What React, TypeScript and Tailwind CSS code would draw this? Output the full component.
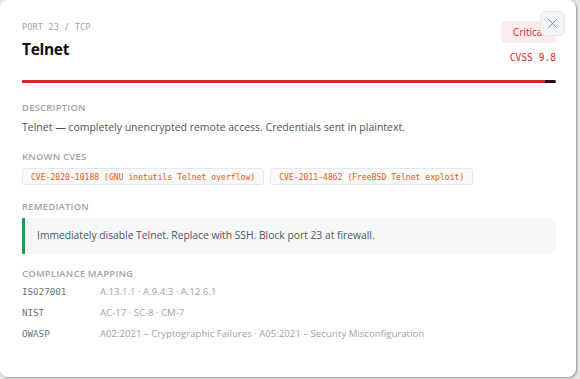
import React from "react";

const mono = { fontFamily: '"DejaVu Sans Mono", "Liberation Mono", monospace' };
const sans = { fontFamily: '"Open Sans", "Noto Sans", sans-serif' };

function Label({ children }: { children: React.ReactNode }) {
  return (
    <div className="text-[9.5px] font-semibold uppercase tracking-[0.2px] text-[#9ca3af] leading-none">
      {children}
    </div>
  );
}

export default function App() {
  return (
    <div className="w-[580px] h-[379px] bg-[#e5e5e5] overflow-hidden" style={sans}>
      <div className="relative w-[576px] h-[377px] bg-white rounded-[8px] shadow-[1px_1px_2px_rgba(0,0,0,0.35)] pl-[22px] pr-[20px] pt-[22px]">
        <button className="absolute top-[11px] right-[11px] w-[25px] h-[25px] rounded-[5px] bg-[#f3f4f6] border border-[#e5e7eb] flex items-center justify-center z-10">
          <svg width="9" height="9" viewBox="0 0 9 9" fill="none">
            <path d="M0.5 0.5L8.5 8.5M8.5 0.5L0.5 8.5" stroke="#7a8ba0" strokeWidth="1" strokeLinecap="round" />
          </svg>
        </button>

        <div className="flex justify-between items-start">
          <div className="flex flex-col">
            <div className="text-[8.6px] text-[#9ca3af] leading-none tracking-[0.1px] mt-[1px]" style={mono}>
              PORT 23 / TCP
            </div>
            <div className="text-[15.5px] font-bold text-[#111111] leading-none mt-[10px] tracking-[-0.3px]">
              Telnet
            </div>
          </div>
          <div className="flex flex-col items-end">
            <div className="h-[22px] -mt-[1px] w-[55px] rounded-[4px] bg-[#fdecec] text-[#dc2626] text-[10px] flex items-center pl-[12px] overflow-hidden whitespace-nowrap">
              Critical
            </div>
            <div className="text-[9.6px] text-[#dc2626] leading-none mt-[10px]" style={mono}>
              CVSS 9.8
            </div>
          </div>
        </div>

        <div className="mt-[17px] h-[3px] w-full bg-[#2a0a0a] rounded-full overflow-hidden">
          <div className="h-full bg-[#dc2626]" style={{ width: "98%" }} />
        </div>

        <div className="mt-[20px]">
          <Label>Description</Label>
          <div className="mt-[10px] text-[10.5px] text-[#4b5563] leading-none">
            Telnet — completely unencrypted remote access. Credentials sent in plaintext.
          </div>
        </div>

        <div className="mt-[19px]">
          <Label>Known CVEs</Label>
          <div className="mt-[7px] flex gap-[6px]">
            <span
              className="h-[17px] px-[8px] flex items-center rounded-[3px] border border-[#e5e7eb] bg-[#f9fafb] text-[8.1px] text-[#ea580c]"
              style={mono}
            >
              CVE-2020-10188 (GNU inetutils Telnet overflow)
            </span>
            <span
              className="h-[17px] px-[8px] flex items-center rounded-[3px] border border-[#e5e7eb] bg-[#f9fafb] text-[8.1px] text-[#ea580c]"
              style={mono}
            >
              CVE-2011-4862 (FreeBSD Telnet exploit)
            </span>
          </div>
        </div>

        <div className="mt-[17px]">
          <Label>Remediation</Label>
          <div className="mt-[6px] h-[36px] rounded-r-[5px] bg-[#f5f8f6] border-l-[3px] border-[#16a34a] flex items-center pl-[12px] text-[10.3px] text-[#4b5563]">
            Immediately disable Telnet. Replace with SSH. Block port 23 at firewall.
          </div>
        </div>

        <div className="mt-[15px]">
          <Label>Compliance Mapping</Label>
          <div className="mt-[8px] flex flex-col gap-[9px]">
            {[
              ["ISO27001", "A.13.1.1 · A.9.4.3 · A.12.6.1"],
              ["NIST", "AC-17 · SC-8 · CM-7"],
              ["OWASP", "A02:2021 – Cryptographic Failures · A05:2021 – Security Misconfiguration"],
            ].map(([k, v]) => (
              <div key={k} className="flex items-center h-[12px]">
                <div className="w-[78px] text-[9.2px] text-[#6b7280]" style={mono}>
                  {k}
                </div>
                <div className="text-[9.6px] text-[#9ca3af]">{v}</div>
              </div>
            ))}
          </div>
        </div>
      </div>
    </div>
  );
}
